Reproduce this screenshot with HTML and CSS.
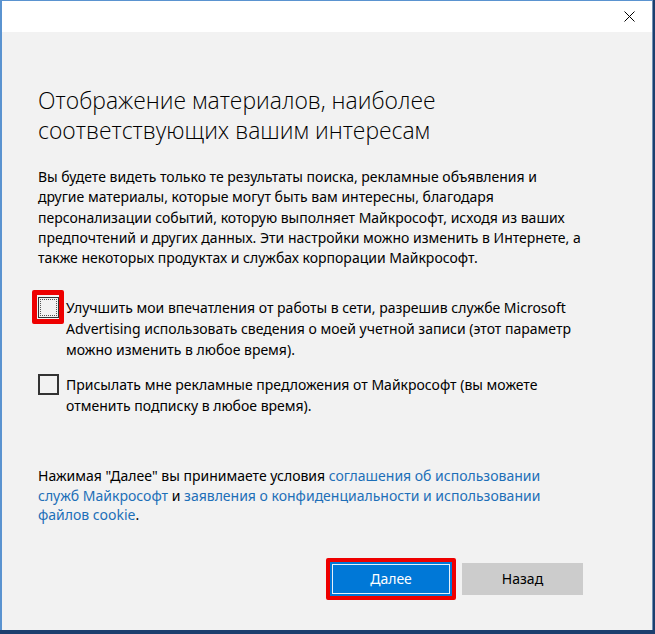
FILE: index.html
```html
<!DOCTYPE html>
<html lang="ru">
<head>
<meta charset="utf-8">
<title>Персонализация</title>
<link rel="stylesheet" href="styles.css">
</head>
<body>
<div class="window">
  <div class="titlebar">
    <button class="close" aria-label="Закрыть">
      <svg width="11" height="11" viewBox="0 0 11 11"><path d="M0.5 0.5L10.5 10.5M10.5 0.5L0.5 10.5" stroke="#000" stroke-width="1" fill="none"/></svg>
    </button>
  </div>
  <div class="content">
    <h1 class="heading">Отображение материалов, наиболее<br>соответствующих вашим интересам</h1>
    <p class="desc">Вы будете видеть только те результаты поиска, рекламные объявления и<br>другие материалы, которые могут быть вам интересны, благодаря<br>персонализации событий, которую выполняет Майкрософт, исходя из ваших<br>предпочтений и других данных. Эти настройки можно изменить в Интернете, а<br>также некоторых продуктах и службах корпорации Майкрософт.</p>
    <div class="options">
      <label class="option">
        <span class="mark highlighted"><span class="box focused"></span></span>
        <span class="option-text">Улучшить мои впечатления от работы в сети, разрешив службе Microsoft<br>Advertising использовать сведения о моей учетной записи (этот параметр<br>можно изменить в любое время).</span>
      </label>
      <label class="option">
        <span class="mark"><span class="box"></span></span>
        <span class="option-text">Присылать мне рекламные предложения от Майкрософт (вы можете<br>отменить подписку в любое время).</span>
      </label>
    </div>
    <p class="legal">Нажимая "Далее" вы принимаете условия <a href="#">соглашения об использовании<br>служб Майкрософт</a> и <a href="#">заявления о конфиденциальности и использовании<br>файлов cookie</a>.</p>
    <div class="actions">
      <span class="highlight-btn"><button class="btn primary">Далее</button></span>
      <button class="btn secondary">Назад</button>
    </div>
  </div>
</div>
</body>
</html>
```

FILE: styles.css
```css
html, body {
  margin: 0;
  padding: 0;
}
body {
  width: 655px;
  height: 634px;
  overflow: hidden;
  background: #1c3f6e;
  font-family: "Noto Sans", "Open Sans", sans-serif;
  color: #000;
}
.window {
  box-sizing: border-box;
  width: 653px;
  height: 630px;
  border-left: 2px solid #5a93d0;
  border-top: 1px solid #5a93d0;
  border-right: 1px solid #6f8fb3;
  background: #f2f2f2;
  display: flex;
  flex-direction: column;
}
.titlebar {
  height: 31px;
  background: #fff;
  display: flex;
  justify-content: flex-end;
  align-items: center;
  flex-shrink: 0;
}
.close {
  border: none;
  background: transparent;
  width: 46px;
  height: 31px;
  padding: 0;
  display: flex;
  align-items: center;
  justify-content: center;
}
.content {
  padding: 54px 0 0 36px;
  display: flex;
  flex-direction: column;
}
.heading {
  margin: 0;
  font-family: "Open Sans", "Noto Sans", sans-serif;
  font-weight: 300;
  font-size: 22.9px;
  line-height: 30px;
  color: #000;
}
.desc {
  margin: 21px 0 0;
  font-size: 14px;
  line-height: 20.3px;
  color: #000;
}
.options {
  margin-top: 29px;
  display: flex;
  flex-direction: column;
  gap: 14px;
}
.option {
  display: flex;
  align-items: flex-start;
  font-size: 14px;
  line-height: 21px;
}
.mark {
  width: 21px;
  height: 21px;
  margin-right: 7px;
  flex-shrink: 0;
  position: relative;
}
.mark.highlighted::before {
  content: "";
  position: absolute;
  left: -6px;
  top: -7px;
  width: 22px;
  height: 24px;
  border: 5px solid #ee0000;
  border-radius: 2px;
}
.box {
  position: relative;
  display: block;
  box-sizing: border-box;
  width: 21px;
  height: 21px;
  border: 2px solid #333;
  background: #f2f2f2;
}
.box.focused {
  border: 1px solid #333;
  outline: 1px dotted #555;
  outline-offset: -3px;
}
.legal {
  margin: 50px 0 0;
  font-size: 14px;
  line-height: 19.5px;
}
.legal a {
  color: #1d6fb8;
  text-decoration: none;
}
.actions {
  margin-top: 33px;
  padding-left: 288px;
  display: flex;
  align-items: center;
  gap: 6px;
}
.highlight-btn {
  display: flex;
  padding: 1px;
  border: 4px solid #ee0000;
  border-radius: 2px;
  background: #0078d7;
}
.btn {
  font-family: inherit;
  font-size: 14px;
  width: 120px;
  height: 32px;
  border: none;
  padding: 0;
}
.btn.primary {
  background: #0078d7;
  color: #fff;
  outline: 1px solid #e8f1fa;
  outline-offset: -2px;
}
.btn.secondary {
  width: 121px;
  height: 32px;
  background: #cccccc;
  color: #000;
}
```
